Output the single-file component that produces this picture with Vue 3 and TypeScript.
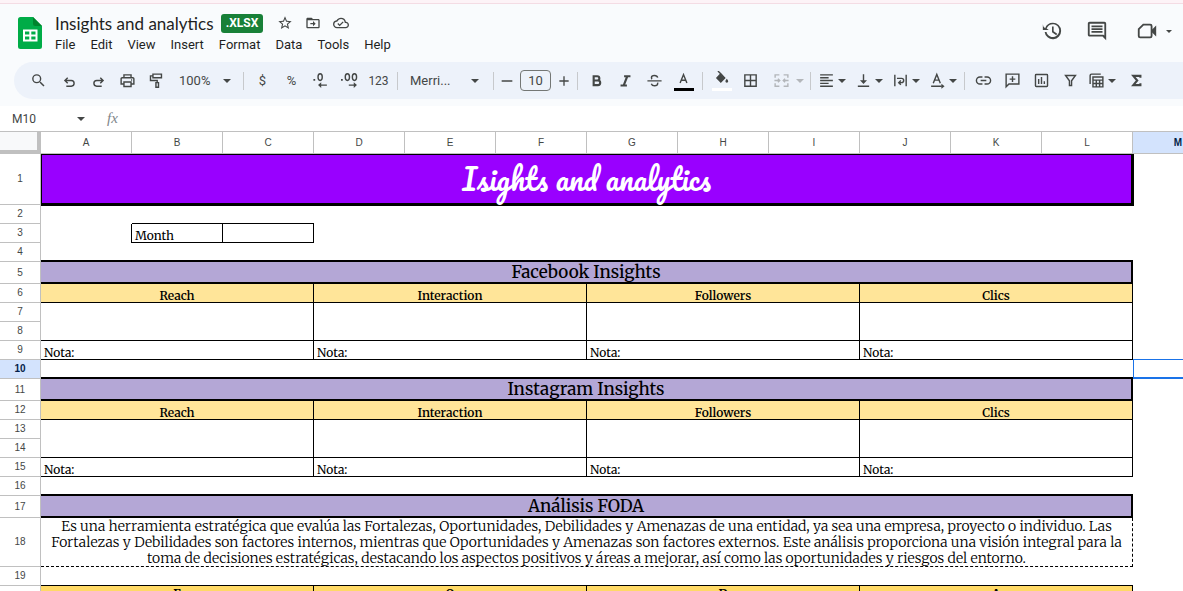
<script setup lang="ts">
import { ref } from 'vue'

interface Tool {
  kind: 'icon' | 'pair' | 'text' | 'sep' | 'zoom' | 'font' | 'size'
  label?: string
  icon?: string
  text?: string
  cls?: string
}

interface Cell {
  text?: string
  span?: number
  rows?: number
  cls?: string
}

interface Row {
  n: number
  size: string
  cells: Cell[]
}

interface Icon {
  fill?: string
  line?: string
}

const icons: Record<string, Icon> = {
  star: { fill: 'M22 9.24l-7.19-.62L12 2 9.19 8.63 2 9.24l5.46 4.73L5.82 21 12 17.27 18.18 21l-1.63-7.03L22 9.24zM12 15.4l-3.76 2.27 1-4.28-3.32-2.88 4.38-.38L12 6.1l1.71 4.04 4.38.38-3.32 2.88 1 4.28L12 15.4z' },
  move: { fill: 'M20 6h-8l-2-2H4c-1.1 0-2 .9-2 2v12c0 1.1.9 2 2 2h16c1.1 0 2-.9 2-2V8c0-1.1-.9-2-2-2zm0 12H4V8h16v10zm-8-1l4-4-4-4v3H8v2h4v3z' },
  cloud: { fill: 'M19.35 10.04A7.49 7.49 0 0 0 12 4C9.11 4 6.6 5.64 5.35 8.04A5.994 5.994 0 0 0 0 14c0 3.31 2.69 6 6 6h13c2.76 0 5-2.24 5-5 0-2.64-2.05-4.78-4.65-4.96zM19 18H6c-2.21 0-4-1.79-4-4 0-2.05 1.53-3.76 3.56-3.97l1.07-.11.5-.95A5.469 5.469 0 0 1 12 6c2.62 0 4.88 1.86 5.39 4.43l.3 1.5 1.53.11A2.98 2.98 0 0 1 22 15c0 1.65-1.35 3-3 3zm-9-3.82l-2.09-2.09L6.5 13.5 10 17l6.01-6.01-1.41-1.41z' },
  history: { fill: 'M13 3a9 9 0 0 0-8.5 6L2.6 7.1 2 4.5V11h6.5L6.2 9.300A7 7 0 1 1 6 13H4a9 9 0 1 0 9-10zm-1 4v6.400l4.600 3.200 1.100-1.500-3.900-2.700V7H12z' },
  comment: { fill: 'M20 2H4c-1.100 0-2 .900-2 2v12c0 1.100.900 2 2 2h14l4 4V4c0-1.100-.900-2-2-2zm0 15l-1-1H4V4h16v13zM6 12h12v2H6zm0-3h12v2H6zm0-3h12v2H6z' },
  video: { fill: 'M17 11l5-5v12l-5-5z', line: 'M8 5h7.500a1.500 1.500 0 0 1 1.500 1.500v11a1.500 1.500 0 0 1-1.500 1.500h-11A1.500 1.500 0 0 1 3 17.500V10z' },
  search: { fill: 'M15.5 14h-.79l-.28-.27A6.471 6.471 0 0 0 16 9.500 6.500 6.500 0 1 0 9.500 16c1.610 0 3.090-.590 4.230-1.570l.270.280v.790l5 4.990L20.490 19l-4.990-5zm-6 0a4.500 4.500 0 1 1 0-9 4.500 4.500 0 0 1 0 9z' },
  undo: { line: 'M9.500 8L5.500 12l4 4M6 12h8.500a4 4 0 0 1 0 8H7.500' },
  redo: { line: 'M14.500 8l4 4-4 4M18 12H9.500a4 4 0 0 0 0 8h7' },
  print: { line: 'M7 8V4h10v4M6.500 17H3v-7.500A1.500 1.500 0 0 1 4.500 8h15A1.500 1.500 0 0 1 21 9.500V17h-3.500M7 14h10v6.500H7zM17 11.300h1.500' },
  paint: { line: 'M7 3h12v5H7zM7 5.500H3.500V12H13v3M11.200 15h3.600v6.500h-3.600z' },
  decLess: { fill: 'M2 10h2.500v2.500H2zM13 22.500l-4.500-4 4.500-4v3h8v2h-8z', line: 'M11.500 2.500c-2.500 0-3 1.800-3 4.700s.5 4.700 3 4.700 3-1.800 3-4.700-.5-4.700-3-4.700z' },
  decMore: { fill: 'M0 10h2.500v2.500H0zM18 22.500l4.500-4-4.500-4v3h-7v2h7z', line: 'M9 2.500c-2.500 0-3 1.800-3 4.700s.5 4.700 3 4.700 3-1.800 3-4.700-.5-4.700-3-4.700zM19 2.500c-2.500 0-3 1.800-3 4.700s.5 4.700 3 4.700 3-1.800 3-4.700-.5-4.700-3-4.700z' },
  minus: { line: 'M4 12h16' },
  plus: { line: 'M5 12h14M12 5v14' },
  bold: { line: 'M8 6h5a3 3 0 0 1 0 6H8zM8 12h6a3.200 3.200 0 0 1 0 6.500H8z' },
  italic: { line: 'M10 6h9M5 19h9M14.500 6l-5 13' },
  strike: { line: 'M2 12.500h20M16.500 8C16 6 14.500 5 12 5 9.500 5 7.700 6.200 7.700 8c0 .8.300 1.500.900 2M7.500 16.500c.7 2 2.200 3 4.500 3 2.700 0 4.500-1.200 4.500-3.200 0-.5-.1-.9-.3-1.300' },
  textColor: { line: 'M7.200 17L12 5l4.800 12M9 13h6' },
  fill: { fill: 'M5.500 10L11 4.500l5.500 5.500L11 15.500zM19.500 11s-2 2.200-2 3.500a2 2 0 0 0 4 0c0-1.300-2-3.500-2-3.500z', line: 'M7 0l4.500 4.500M11 4l5.500 6-5.500 5.500L5.500 10z' },
  borders: { line: 'M4 4h16v16H4zM12 4v16M4 12h16' },
  merge: { line: 'M9 4H3v4M3 16v4h6M15 4h6v4M21 16v4h-6M2 12h7M22 12h-7M7 9.500l2.500 2.500L7 14.500M17 9.500L14.500 12l2.500 2.500' },
  alignLeft: { line: 'M3 4h18M3 8h12M3 12h18M3 16h12M3 20h18' },
  alignBottom: { fill: 'M7 11.500h10L12 17z', line: 'M12 3v11M4 20h16' },
  wrap: { line: 'M4 4v16M20 4v16M7 9h6.500a3 3 0 0 1 0 6H10M12.500 12L9.500 15l3 3' },
  rotate: { fill: 'M17.500 16.500l4.500 3.500-4.500 3.500z', line: 'M6 16l5-12.500L16 16M8 11.500h6M3 20h15' },
  link: { line: 'M10.500 7H7a5 5 0 0 0 0 10h3.500M13.500 7H17a5 5 0 0 1 0 10h-3.500M8 12h8' },
  addComment: { line: 'M3 21V3h18v14H7zM12 6v8M8 10h8' },
  chart: { line: 'M4.500 3.500h15a1 1 0 0 1 1 1v15a1 1 0 0 1-1 1h-15a1 1 0 0 1-1-1v-15a1 1 0 0 1 1-1zM8 10v7M12 7v10M16 13v4' },
  filter: { line: 'M5 5h14l-5.500 7.500V19h-3v-6.500z' },
  tableView: { line: 'M3 17V5a2 2 0 0 1 2-2h13M7 7h14v14H7zM7 11.500h14M7 16.200h14M11.700 11.500V21M16.400 11.500V21' },
  sigma: { line: 'M17.500 8V5.500H7.500L13 12l-5.500 6.500h10V16' },
}

const tools: Tool[] = [
  { kind: 'icon', icon: 'search', label: 'Search the menus', cls: 'first' },
  { kind: 'icon', icon: 'undo', label: 'Undo' },
  { kind: 'icon', icon: 'redo', label: 'Redo' },
  { kind: 'icon', icon: 'print', label: 'Print' },
  { kind: 'icon', icon: 'paint', label: 'Paint format' },
  { kind: 'zoom', label: 'Zoom' },
  { kind: 'sep' },
  { kind: 'text', text: '$', label: 'Format as currency' },
  { kind: 'text', text: '%', label: 'Format as percent' },
  { kind: 'icon', icon: 'decLess', label: 'Decrease decimal places' },
  { kind: 'icon', icon: 'decMore', label: 'Increase decimal places' },
  { kind: 'text', text: '123', label: 'More formats', cls: 'small' },
  { kind: 'sep' },
  { kind: 'font', label: 'Font' },
  { kind: 'sep' },
  { kind: 'size', label: 'Font size' },
  { kind: 'sep' },
  { kind: 'icon', icon: 'bold', label: 'Bold', cls: 'heavy' },
  { kind: 'icon', icon: 'italic', label: 'Italic', cls: 'heavy' },
  { kind: 'icon', icon: 'strike', label: 'Strikethrough' },
  { kind: 'icon', icon: 'textColor', label: 'Text color', cls: 'swatch black' },
  { kind: 'sep' },
  { kind: 'icon', icon: 'fill', label: 'Fill color', cls: 'swatch white' },
  { kind: 'icon', icon: 'borders', label: 'Borders' },
  { kind: 'pair', icon: 'merge', label: 'Merge cells', cls: 'wide faded' },
  { kind: 'sep' },
  { kind: 'pair', icon: 'alignLeft', label: 'Horizontal align' },
  { kind: 'pair', icon: 'alignBottom', label: 'Vertical align' },
  { kind: 'pair', icon: 'wrap', label: 'Text wrapping' },
  { kind: 'pair', icon: 'rotate', label: 'Text rotation', cls: 'last' },
  { kind: 'sep' },
  { kind: 'icon', icon: 'link', label: 'Insert link' },
  { kind: 'icon', icon: 'addComment', label: 'Insert comment' },
  { kind: 'icon', icon: 'chart', label: 'Insert chart' },
  { kind: 'icon', icon: 'filter', label: 'Create a filter' },
  { kind: 'pair', icon: 'tableView', label: 'Table views' },
  { kind: 'icon', icon: 'sigma', label: 'Functions', cls: 'heavy' },
]

const menus = ['File', 'Edit', 'View', 'Insert', 'Format', 'Data', 'Tools', 'Help']
const columns = 'ABCDEFGHIJKLM'.split('')
const metrics = ['Reach', 'Interaction', 'Followers', 'Clics']

const title = ref('Insights and analytics')
const cellRef = ref('M10')
const formula = ref('')
const fontSize = ref('10')

const side: Cell = {}

function insightRows(start: number, name: string): Row[] {
  return [
    { n: start, size: 'band-row', cells: [{ text: name, span: 12, cls: 'band' }, side] },
    { n: start + 1, size: 'line', cells: [...metrics.map((text) => ({ text, span: 3, cls: 'metric' })), side] },
    { n: start + 2, size: 'line', cells: [...metrics.map(() => ({ span: 3, rows: 2, cls: 'boxed' })), side] },
    { n: start + 3, size: 'line', cells: [side] },
    { n: start + 4, size: 'line', cells: [...metrics.map(() => ({ text: 'Nota:', span: 3, cls: 'boxed' })), start === 5 ? { cls: 'above-active' } : side] },
  ]
}

const analysis =
  'Es una herramienta estratégica que evalúa las Fortalezas, Oportunidades, Debilidades y Amenazas de una entidad, ya sea una empresa, proyecto o individuo. Las Fortalezas y Debilidades son factores internos, mientras que Oportunidades y Amenazas son factores externos. Este análisis proporciona una visión integral para la toma de decisiones estratégicas, destacando los aspectos positivos y áreas a mejorar, así como las oportunidades y riesgos del entorno.'

const rows: Row[] = [
  { n: 1, size: 'banner-row', cells: [{ text: 'Isights and analytics', span: 12, cls: 'banner' }, { cls: 'banner-edge' }] },
  { n: 2, size: 'line', cells: [{ cls: 'banner-base' }, { span: 2, cls: 'banner-base rule' }, { span: 9, cls: 'banner-base' }, { cls: 'corner-edge' }] },
  { n: 3, size: 'line', cells: [{ cls: 'edge' }, { text: 'Month', cls: 'boxed' }, { cls: 'boxed' }, { span: 10 }] },
  { n: 4, size: 'line', cells: [{ span: 12, cls: 'rule2' }, side] },
  ...insightRows(5, 'Facebook Insights'),
  { n: 10, size: 'line', cells: [{ span: 12, cls: 'rule2' }, { cls: 'active' }] },
  ...insightRows(11, 'Instagram Insights'),
  { n: 16, size: 'line', cells: [{ span: 12, cls: 'rule2' }, side] },
  { n: 17, size: 'band-row', cells: [{ text: 'Análisis FODA', span: 12, cls: 'band' }, side] },
  { n: 18, size: 'text-row', cells: [{ text: analysis, span: 12, cls: 'analysis' }, side] },
  { n: 19, size: 'line', cells: [{ span: 12, cls: 'rule' }, side] },
  { n: 20, size: 'letter-row', cells: [...['F', 'O', 'D', 'A'].map((text) => ({ text, span: 3, cls: 'letter' })), side] },
]
</script>

<template>
  <div class="app">
    <header class="top">
      <svg class="logo" viewBox="0 0 24 32" aria-hidden="true">
        <path d="M2.500 0H15l9 9v20.500a2.500 2.500 0 0 1-2.500 2.500h-19A2.500 2.500 0 0 1 0 29.500v-27A2.500 2.500 0 0 1 2.500 0z" fill="#00ac47" />
        <path d="M15 0l9 9h-6.500A2.500 2.500 0 0 1 15 6.500z" fill="#00832d" />
        <path d="M5 12.500h14.500v12H5zM7 14.500v3h4.300v-3zm6.300 0v3h4.200v-3zM7 19.500v3h4.300v-3zm6.300 0v3h4.200v-3z" fill="#fff" fill-rule="evenodd" />
      </svg>
      <div class="heading">
        <div class="name-row">
          <input v-model="title" class="doc-name" aria-label="Document name" />
          <span class="badge">.XLSX</span>
          <button v-for="i in ['star', 'move', 'cloud']" :key="i" class="mini" :aria-label="i">
            <svg viewBox="0 0 24 24"><path class="solid" :d="icons[i].fill" /></svg>
          </button>
        </div>
        <nav class="menus">
          <button v-for="m in menus" :key="m">{{ m }}</button>
        </nav>
      </div>
      <div class="actions">
        <button v-for="i in ['history', 'comment', 'video']" :key="i" :class="i" :aria-label="i">
          <svg viewBox="0 0 24 24">
            <path class="solid" :d="icons[i].fill" />
            <path v-if="icons[i].line" class="stroke" :d="icons[i].line" />
          </svg>
          <i v-if="i === 'video'" class="arrow"></i>
        </button>
      </div>
    </header>

    <div class="toolbar" role="toolbar">
      <template v-for="(t, k) in tools" :key="k">
        <span v-if="t.kind === 'sep'" class="sep"></span>
        <label v-else-if="t.kind === 'zoom'" class="drop zoom">
          <select :aria-label="t.label"><option>100%</option></select>
          <i class="arrow"></i>
        </label>
        <label v-else-if="t.kind === 'font'" class="drop font">
          <select :aria-label="t.label"><option>Merri...</option></select>
          <i class="arrow"></i>
        </label>
        <div v-else-if="t.kind === 'size'" class="size">
          <button aria-label="Decrease font size"><svg viewBox="0 0 24 24"><path class="stroke" :d="icons.minus.line" /></svg></button>
          <input v-model="fontSize" :aria-label="t.label" />
          <button aria-label="Increase font size"><svg viewBox="0 0 24 24"><path class="stroke" :d="icons.plus.line" /></svg></button>
        </div>
        <button v-else class="tool" :class="[t.kind, t.cls]" :aria-label="t.label">
          <template v-if="t.icon">
            <svg viewBox="0 0 24 24">
              <path v-if="icons[t.icon].fill" class="solid" :d="icons[t.icon].fill" />
              <path v-if="icons[t.icon].line" class="stroke" :d="icons[t.icon].line" />
            </svg>
            <i v-if="t.kind === 'pair'" class="arrow"></i>
          </template>
          <template v-else>{{ t.text }}</template>
        </button>
      </template>
    </div>

    <div class="formula-bar">
      <label class="name-box">
        <input v-model="cellRef" aria-label="Name box" />
        <i class="arrow"></i>
      </label>
      <label class="fx" for="formula">fx</label>
      <input id="formula" v-model="formula" class="formula" />
    </div>

    <main class="sheet">
      <table>
        <colgroup>
          <col class="gutter" />
          <col v-for="c in columns" :key="c" class="col" />
        </colgroup>
        <thead>
          <tr>
            <td class="corner"></td>
            <th v-for="c in columns" :key="c" scope="col" :class="{ current: c === 'M' }">{{ c }}</th>
          </tr>
        </thead>
        <tbody>
          <tr v-for="r in rows" :key="r.n" :class="r.size">
            <th scope="row" :class="{ current: r.n === 10 }">{{ r.n }}</th>
            <td v-for="(c, k) in r.cells" :key="k" :colspan="c.span" :rowspan="c.rows" :class="c.cls">{{ c.text }}</td>
          </tr>
        </tbody>
      </table>
    </main>
  </div>
</template>

<style>
body {
  margin: 0;
  overflow: hidden;
}
</style>

<style scoped>
.app {
  box-sizing: border-box;
  display: flex;
  flex-direction: column;
  height: 100vh;
  border-top: 3px solid #fdf3f7;
  background: #f9fbfd;
  color: #444746;
  font-family: Roboto, "Liberation Sans", sans-serif;
  overflow: hidden;
}
button,
input,
select {
  box-sizing: border-box;
  margin: 0;
  padding: 0;
  border: 0;
  background: none;
  color: inherit;
  font: inherit;
  appearance: none;
  outline: none;
}
button {
  display: flex;
  align-items: center;
  justify-content: center;
}
svg {
  display: block;
  flex: none;
}
.solid {
  fill: currentColor;
}
.stroke {
  fill: none;
  stroke: currentColor;
  stroke-width: 2;
}
.arrow {
  flex: none;
  border: 4px solid transparent;
  border-top-color: currentColor;
  border-bottom: 0;
}

.top {
  display: flex;
  flex: none;
  box-sizing: border-box;
  height: 59px;
  padding: 7px 11px 0 18px;
  border-top: 1px solid #f4dce4;
}
.logo {
  width: 24px;
  height: 32px;
  margin: 6px 13px 0 0;
}
.name-row {
  display: flex;
  align-items: center;
  height: 24px;
}
.doc-name {
  width: 166px;
  color: #1f1f1f;
  font-family: "Google Sans", "Product Sans", Lato, sans-serif;
  font-size: 17px;
}
.badge {
  width: 42px;
  margin-right: 8px;
  border-radius: 3px;
  background: #188038;
  color: #fff;
  font-size: 12px;
  font-weight: 700;
  line-height: 19px;
  text-align: center;
}
.mini {
  width: 28px;
  height: 24px;
}
.mini svg {
  width: 16px;
  height: 16px;
}
.menus {
  display: flex;
  gap: 15px;
}
.menus button {
  color: #1f1f1f;
  font-size: 13px;
  line-height: 20px;
}
.actions {
  display: flex;
  gap: 23px;
  height: 40px;
  margin-left: auto;
}
.actions svg {
  width: 22px;
  height: 22px;
}
.video {
  margin-left: 5px;
}
.actions .arrow {
  margin-left: 8px;
  border-width: 3px;
  border-bottom: 0;
}

.toolbar {
  display: flex;
  flex: none;
  align-items: center;
  height: 37px;
  margin: 0 0 7px 14px;
  padding-left: 10px;
  border-radius: 19px 0 0 19px;
  background: #edf2fa;
  overflow: hidden;
}
.tool {
  flex: none;
  width: 29px;
  height: 28px;
  font-size: 13px;
}
.tool.small {
  font-size: 12px;
}
.tool svg {
  width: 17px;
  height: 17px;
}
.tool.first {
  margin-right: 2px;
}
.pair {
  justify-content: flex-start;
  width: 34px;
  margin-right: 3px;
  padding-left: 3px;
}
.pair .arrow {
  margin-left: 3px;
}
.pair.wide {
  width: 41px;
  margin-right: 0;
  padding-left: 8px;
}
.pair.wide .arrow {
  margin-left: 6px;
}
.pair.last {
  margin-right: 0;
}
.faded {
  color: #b3b6ba;
}
.heavy .stroke {
  stroke-width: 3;
}
.swatch {
  flex-direction: column;
}
.swatch::after {
  width: 20px;
  height: 3px;
  content: "";
}
.swatch.black::after {
  background: #000;
}
.swatch.white::after {
  background: #fff;
}
.sep {
  flex: none;
  width: 1px;
  height: 18px;
  margin: 0 4px;
  background: #c7c9cc;
}
.drop {
  display: flex;
  flex: none;
  align-items: center;
  justify-content: space-between;
  box-sizing: border-box;
  height: 28px;
  font-size: 13px;
}
.zoom {
  width: 68px;
  padding: 0 8px;
}
.font {
  width: 87px;
  padding: 0 10px 0 8px;
}
.size {
  display: flex;
  flex: none;
  align-items: center;
  gap: 4px;
}
.size button {
  width: 18px;
  height: 20px;
}
.size svg {
  width: 16px;
  height: 16px;
}
.size input {
  width: 31px;
  height: 21px;
  border: 1px solid #747775;
  border-radius: 4px;
  font-size: 13px;
  text-align: center;
}

.formula-bar {
  display: flex;
  flex: none;
  align-items: center;
  box-sizing: border-box;
  height: 26px;
  border-bottom: 1px solid #c0c0c0;
  background: #fff;
}
.name-box {
  display: flex;
  align-items: center;
  width: 73px;
  padding-left: 12px;
}
.name-box input {
  width: 65px;
  font-size: 12px;
}
.fx {
  width: 22px;
  margin-left: 22px;
  color: #80868b;
  font-family: "Liberation Serif", serif;
  font-size: 15px;
  font-style: italic;
}
.formula {
  flex: 1;
}

.sheet {
  flex: 1;
  min-height: 0;
  background: #fff;
  overflow: hidden;
}
table {
  width: 1224px;
  border-spacing: 0;
  table-layout: fixed;
  color: #000;
  font-family: Merriweather, "DejaVu Serif Condensed", "DejaVu Serif", serif;
  font-size: 12px;
  line-height: 12px;
}
.gutter {
  width: 41px;
}
.col {
  width: 91px;
}
th,
td {
  box-sizing: border-box;
  padding: 0 3px;
  vertical-align: bottom;
}
th {
  border: 0 solid #c0c0c0;
  border-width: 0 1px 1px 0;
  background: #fff;
  color: #444746;
  font-family: "Liberation Sans", Arial, sans-serif;
  font-size: 10px;
  font-weight: 400;
  text-align: center;
  vertical-align: middle;
}
thead tr {
  height: 22px;
}
.corner {
  border: 0 solid #c0c0c0;
  border-width: 0 4px 4px 0;
  background: #f8f9fa;
}
.current {
  background: #d3e3fd;
  color: #041e49;
  font-weight: 700;
}
.line {
  height: 19px;
}
.band-row {
  height: 22px;
}
.banner-row {
  height: 51px;
}
.text-row {
  height: 49px;
}
.letter-row {
  height: 40px;
}
.banner {
  border: 1px solid #000;
  border-width: 1px 2px 2px 1px;
  background: #9900ff;
  color: #fff;
  font-family: Pacifico, "Liberation Serif", serif;
  font-size: 29px;
  line-height: 36px;
  text-align: center;
  vertical-align: middle;
}
.banner-edge {
  border-left: 1px solid #000;
}
.banner-base {
  border-top: 1px solid #000;
}
.corner-edge {
  background: linear-gradient(#000, #000) 0 0 / 1px 1px no-repeat;
}
.rule {
  border-bottom: 1px solid #000;
}
.rule2 {
  border-bottom: 2px solid #000;
}
.edge {
  border-right: 1px solid #000;
}
.boxed {
  border: 0 solid #000;
  border-width: 0 1px 1px 0;
}
.band {
  border: 0 solid #000;
  border-width: 0 2px 2px 0;
  background: #b4a7d6;
  font-size: 17px;
  font-weight: 500;
  line-height: 20px;
  text-align: center;
}
.metric {
  border: 0 solid #000;
  border-width: 0 1px 1px 0;
  background: #ffe599;
  font-weight: 600;
  text-align: center;
}
.above-active {
  border-bottom: 1px solid #1a73e8;
}
.active {
  border: 0 solid #1a73e8;
  border-width: 0 0 2px 1px;
}
.analysis {
  border: 0 dashed #000;
  border-width: 0 1px 1px 0;
  font-size: 14px;
  font-weight: 300;
  line-height: 16px;
  text-align: center;
}
.letter {
  padding-top: 2px;
  border-right: 1px solid #000;
  background: #ffd966;
  font-weight: 700;
  text-align: center;
  vertical-align: top;
}
</style>
